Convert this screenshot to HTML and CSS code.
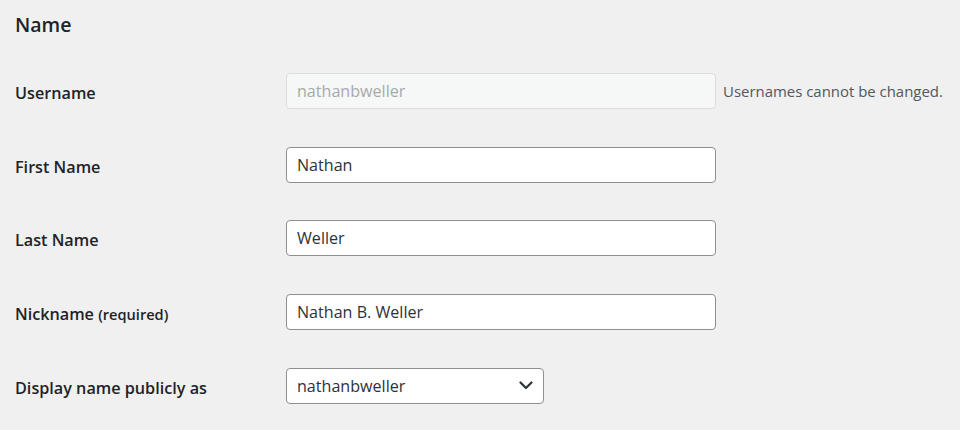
FILE: index.html
```html
<!DOCTYPE html>
<html>
<head>
<meta charset="utf-8">
<link rel="stylesheet" href="styles.css">
</head>
<body>
<div class="wrap">
  <h2 class="title">Name</h2>
  <div class="form">
    <div class="row">
      <div class="label">Username</div>
      <div class="field">
        <div class="input disabled">nathanbweller</div>
        <span class="desc">Usernames cannot be changed.</span>
      </div>
    </div>
    <div class="row">
      <div class="label">First Name</div>
      <div class="field"><div class="input">Nathan</div></div>
    </div>
    <div class="row">
      <div class="label">Last Name</div>
      <div class="field"><div class="input">Weller</div></div>
    </div>
    <div class="row">
      <div class="label">Nickname <span class="req">(required)</span></div>
      <div class="field"><div class="input">Nathan B. Weller</div></div>
    </div>
    <div class="row">
      <div class="label">Display name publicly as</div>
      <div class="field">
        <div class="input select">
          <span>nathanbweller</span>
          <svg class="chev" width="14" height="9" viewBox="0 0 14 9"><path d="M1.5 1.5 L7 7 L12.5 1.5" fill="none" stroke="#2c3338" stroke-width="2.2" stroke-linecap="round" stroke-linejoin="round"/></svg>
        </div>
      </div>
    </div>
  </div>
</div>
</body>
</html>
```
FILE: styles.css
```css
html, body {
  margin: 0;
  padding: 0;
  background: #f0f0f1;
}
body {
  font-family: "Open Sans", "Noto Sans", sans-serif;
  color: #1d2327;
  width: 960px;
  height: 430px;
  overflow: hidden;
}
.wrap {
  padding-left: 15px;
}
.title {
  margin: 0;
  height: 54px;
  padding-top: 11px;
  box-sizing: border-box;
  font-size: 19.5px;
  font-weight: 600;
  line-height: 28px;
}
.row {
  display: flex;
  align-items: center;
  height: 73.75px;
}
.label {
  width: 271px;
  flex: none;
  font-size: 16.2px;
  font-weight: 600;
  padding-top: 4px;
}
.req {
  font-size: 14.6px;
}
.field {
  display: flex;
  align-items: center;
}
.input {
  box-sizing: border-box;
  width: 430px;
  height: 36px;
  border: 1px solid #8c8f94;
  border-radius: 4px;
  background: #fff;
  padding: 0 10px;
  font-size: 16.1px;
  line-height: 34px;
  color: #2c3338;
}
.input.disabled {
  background: #f6f7f7;
  border-color: #dcdcde;
  color: #a7aaad;
}
.desc {
  margin-left: 7px;
  font-size: 14.95px;
  color: #50575e;
}
.select {
  width: 258px;
  display: flex;
  align-items: center;
  justify-content: space-between;
  padding-right: 10px;
}
.chev {
  display: block;
}
```
